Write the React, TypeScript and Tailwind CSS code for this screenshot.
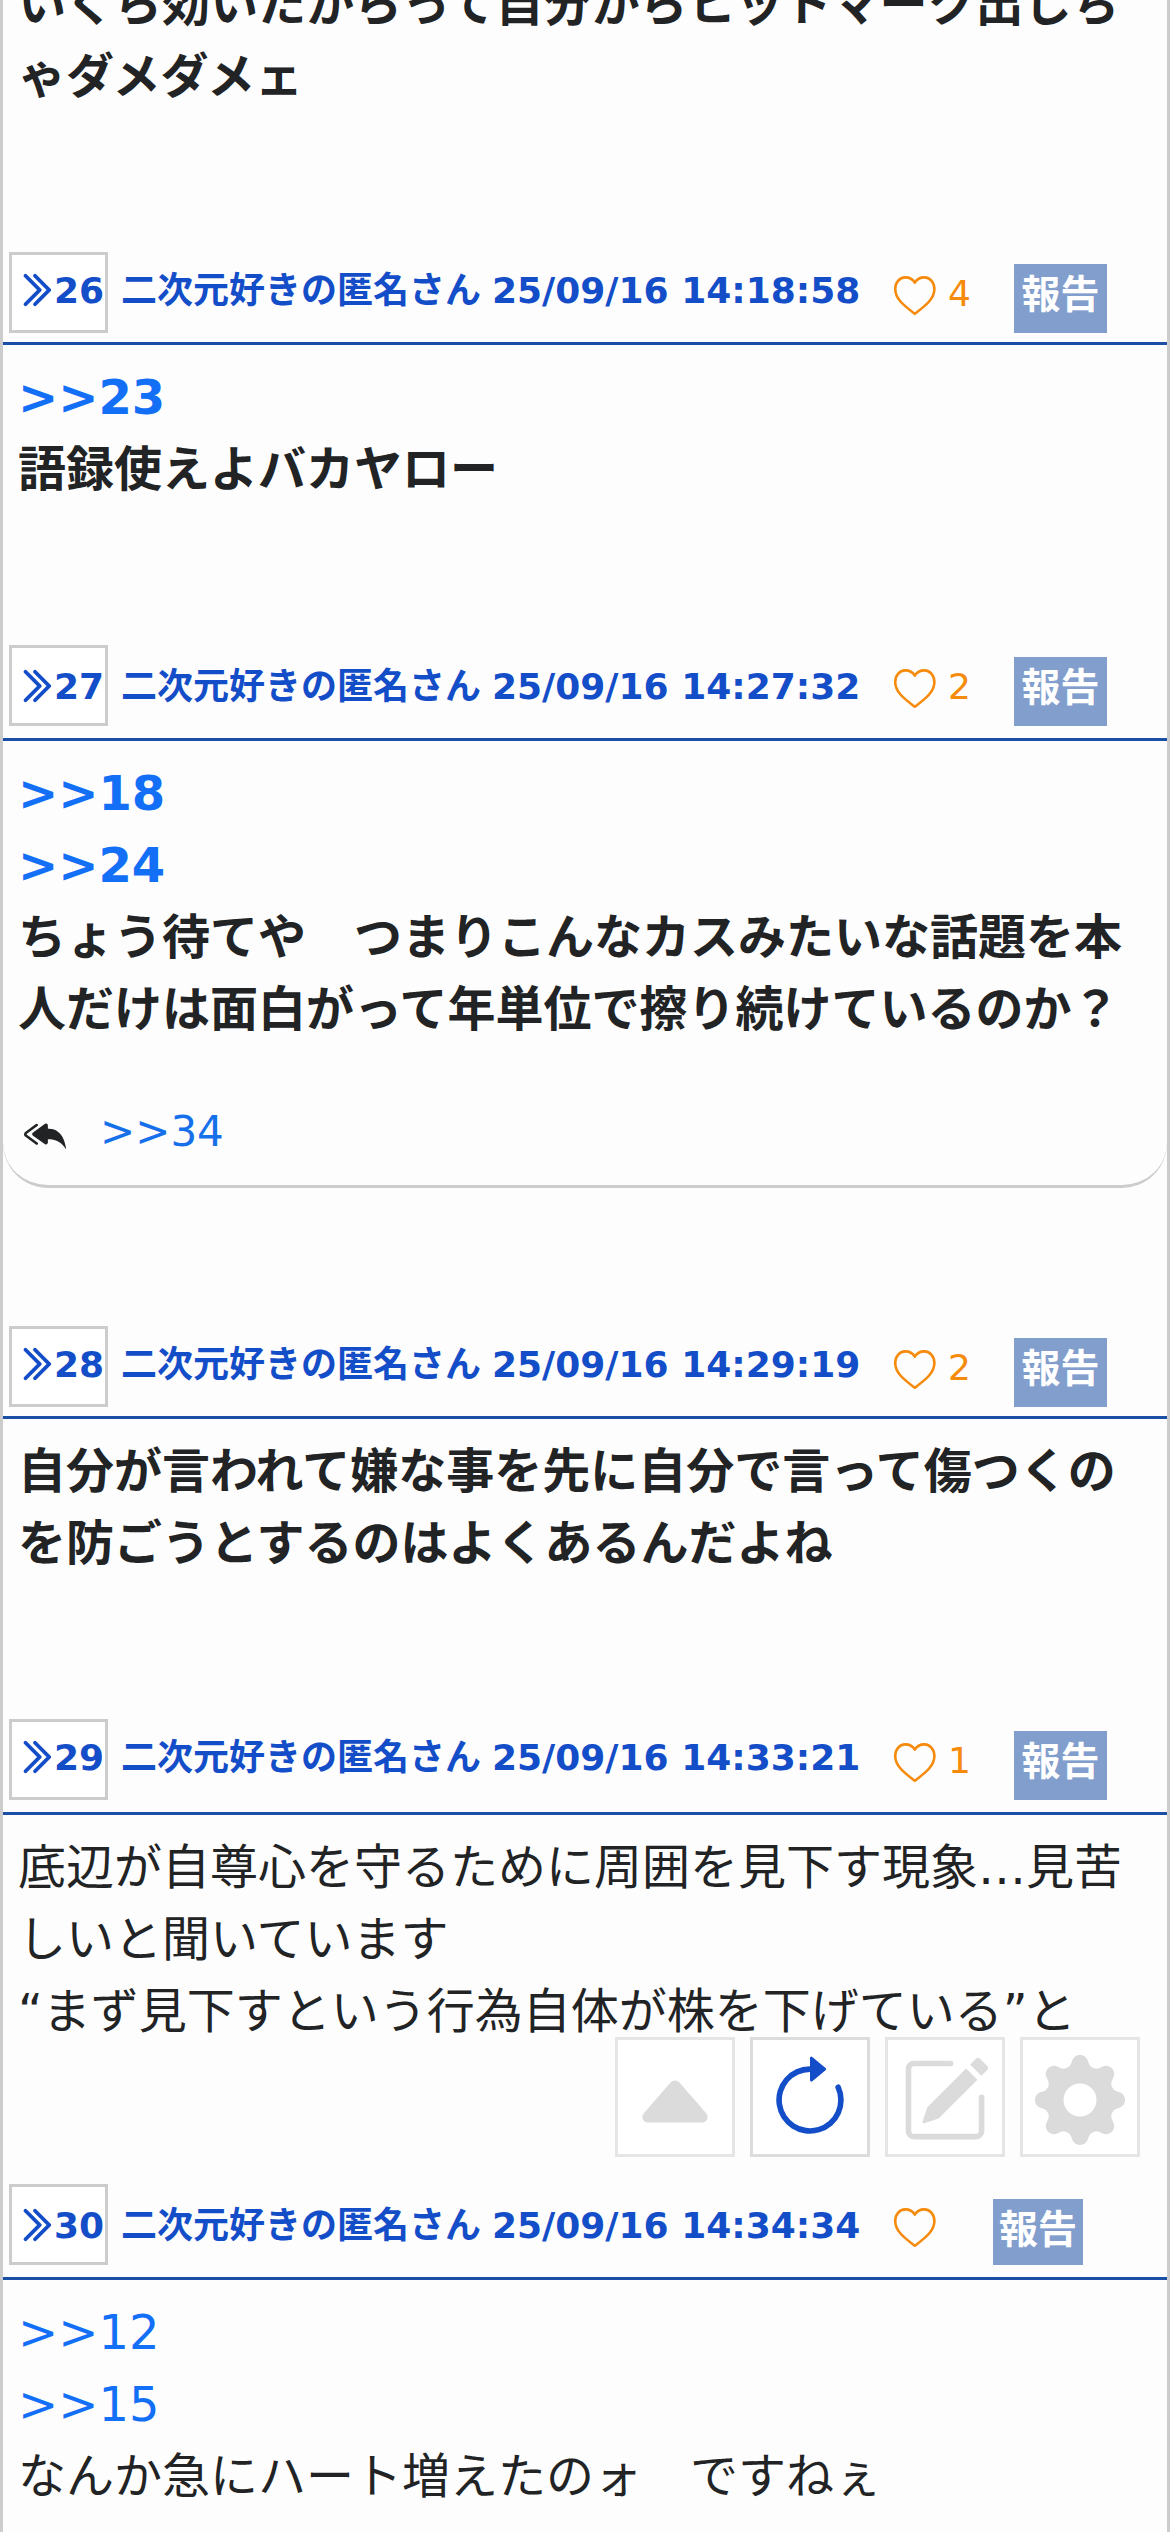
import React, { type FunctionComponent } from "react";
import {
  BsArrowClockwise,
  BsCaretUpFill,
  BsChevronDoubleRight,
  BsGearFill,
  BsPencilSquare,
  BsReplyAllFill,
} from "react-icons/bs";
import clsx from "clsx";

interface Post {
  id: number;
  date: string;
  likes?: number;
  bold?: boolean;
  anchors?: number[];
  lines: string[];
  replies?: number[];
  // header variants
  tall?: boolean;
  lowText?: boolean;
  height: string;
}

const posts: Post[] = [
  {
    id: 26,
    date: "25/09/16 14:18:58",
    likes: 4,
    bold: true,
    anchors: [23],
    lines: ["語録使えよバカヤロー"],
    height: "h-[393px]",
  },
  {
    id: 27,
    date: "25/09/16 14:27:32",
    likes: 2,
    bold: true,
    anchors: [18, 24],
    lines: [
      "ちょう待てや　つまりこんなカスみたいな話題を本",
      "人だけは面白がって年単位で擦り続けているのか？",
    ],
    replies: [34],
    tall: true,
    lowText: true,
    height: "h-[681px]",
  },
  {
    id: 28,
    date: "25/09/16 14:29:19",
    likes: 2,
    bold: true,
    lines: [
      "自分が言われて嫌な事を先に自分で言って傷つくの",
      "を防ごうとするのはよくあるんだよね",
    ],
    height: "h-[393px]",
  },
  {
    id: 29,
    date: "25/09/16 14:33:21",
    likes: 1,
    lines: [
      "底辺が自尊心を守るために周囲を見下す現象…見苦",
      "しいと聞いています",
      "“まず見下すという行為自体が株を下げている”と",
    ],
    tall: true,
    height: "h-[465px]",
  },
  {
    id: 30,
    date: "25/09/16 14:34:34",
    anchors: [12, 15],
    lines: ["なんか急にハート増えたのォ　ですねぇ"],
    tall: true,
    lowText: true,
    height: "h-[348px]",
  },
];

const HeartIcon: FunctionComponent = () => (
  <svg
    className="mt-[22px] size-[45px] shrink-0"
    viewBox="0 0 45 45"
    fill="none"
    stroke="currentColor"
    strokeWidth="2.6"
    strokeLinejoin="round"
  >
    <path d="M22.8 8.6C20.5 5 17 3.3 13.2 3.4C7.4 3.6 3.2 8.6 3.2 15C3.2 25 12 31.5 22.8 39.8C33.6 31.5 42.4 25 42.4 15C42.4 8.6 38.2 3.6 32.4 3.4C28.6 3.3 25.1 5 22.8 8.6Z" />
  </svg>
);

const PostHeader: FunctionComponent<{ post: Post }> = ({ post }) => {
  const hasLikes = post.likes !== undefined;
  return (
    <header
      className={clsx(
        "flex items-start border-b-[3px] border-[#1a4fa5] pl-1.5 text-[36px] leading-[54px] text-[#134dc8]",
        post.tall ? "h-[96px]" : "h-[93px]"
      )}
    >
      <a
        className={clsx(
          "flex h-[81px] w-[99px] shrink-0 items-start border-[3px] border-[#cccccc] bg-white pl-1 font-bold",
          post.lowText ? "pt-3" : "pt-[9px]"
        )}
      >
        <BsChevronDoubleRight className="mt-[7px] size-[38px] shrink-0 stroke-current stroke-[0.6]" />
        <span>{post.id}</span>
      </a>
      <div
        className={clsx(
          "ml-[13px] flex w-[771px] shrink-0 gap-[11px] whitespace-nowrap font-bold",
          post.lowText ? "pt-[15px]" : "pt-3"
        )}
      >
        <span>二次元好きの匿名さん</span>
        <span>{post.date}</span>
      </div>
      <div
        className={clsx(
          "flex shrink-0 items-start text-[#f58a0b]",
          hasLikes ? "w-[122px]" : "w-[101px]"
        )}
      >
        <HeartIcon />
        <span className="ml-[11px] pt-[15px]">{post.likes}</span>
      </div>
      <button
        className={clsx(
          "shrink-0 bg-[#819ecd] text-[39px] leading-[62px] font-bold text-white",
          hasLikes ? "mt-3 h-[69px] w-[93px]" : "mt-[15px] h-[66px] w-[90px]"
        )}
      >
        <span className="block h-full whitespace-nowrap">報告</span>
      </button>
    </header>
  );
};

const PostItem: FunctionComponent<{ post: Post }> = ({ post }) => (
  <article className={clsx("flex shrink-0 flex-col", post.height)}>
    <PostHeader post={post} />
    <div
      className={clsx(
        "pt-4 pl-[15px] text-[48px] leading-[72px] whitespace-nowrap",
        post.bold && "font-bold"
      )}
    >
      {post.anchors?.map((n) => (
        <p key={n} className="text-[#136ff5]">
          &gt;&gt;{n}
        </p>
      ))}
      {post.lines.map((line) => (
        <p key={line}>{line}</p>
      ))}
    </div>
    {post.replies && (
      <footer className="flex h-[143px] items-start rounded-b-[45px] border-b-[3px] border-[#cccccc] pt-[55px] pl-[21px]">
        <BsReplyAllFill className="mt-[13px] size-[42px]" />
        {post.replies.map((n) => (
          <a key={n} className="ml-[34px] text-[42px] leading-[63px] text-[#1670ea]">
            &gt;&gt;{n}
          </a>
        ))}
      </footer>
    )}
  </article>
);

const toolButton =
  "flex size-[120px] items-center justify-center border-[3px] bg-white pt-1.5";

const Toolbar: FunctionComponent = () => (
  <nav className="absolute top-[2037px] right-[30px] flex gap-[15px] text-[#dbdbdb]">
    <button className={clsx(toolButton, "border-[#e5e5e5]")}>
      <BsCaretUpFill className="size-[90px]" />
    </button>
    <button className={clsx(toolButton, "border-[#dcdcdc] text-[#134dc8]")}>
      <BsArrowClockwise className="size-[90px]" />
    </button>
    <button className={clsx(toolButton, "border-[#e5e5e5]")}>
      <BsPencilSquare className="size-[90px]" />
    </button>
    <button className={clsx(toolButton, "border-[#e5e5e5]")}>
      <BsGearFill className="size-[90px]" />
    </button>
  </nav>
);

const App: FunctionComponent = () => {
  return (
    <div
      lang="ja"
      className="relative h-[2532px] w-[1170px] overflow-hidden bg-[#fdfdfd] font-['DejaVu_Sans','Noto_Sans_CJK_JP',sans-serif] text-[#212325]"
    >
      <main className="flex h-full flex-col overflow-hidden border-x-[3px] border-[#cccccc]">
        {/* tail of the previous post */}
        <div className="-mt-8 h-[284px] shrink-0 pl-[15px] text-[48px] leading-[72px] font-bold whitespace-nowrap">
          <p>いくら効いたからって自分からヒットマーク出しち</p>
          <p>ゃダメダメェ</p>
        </div>
        {posts.map((post) => (
          <PostItem key={post.id} post={post} />
        ))}
      </main>
      <Toolbar />
    </div>
  );
};

export default App;
